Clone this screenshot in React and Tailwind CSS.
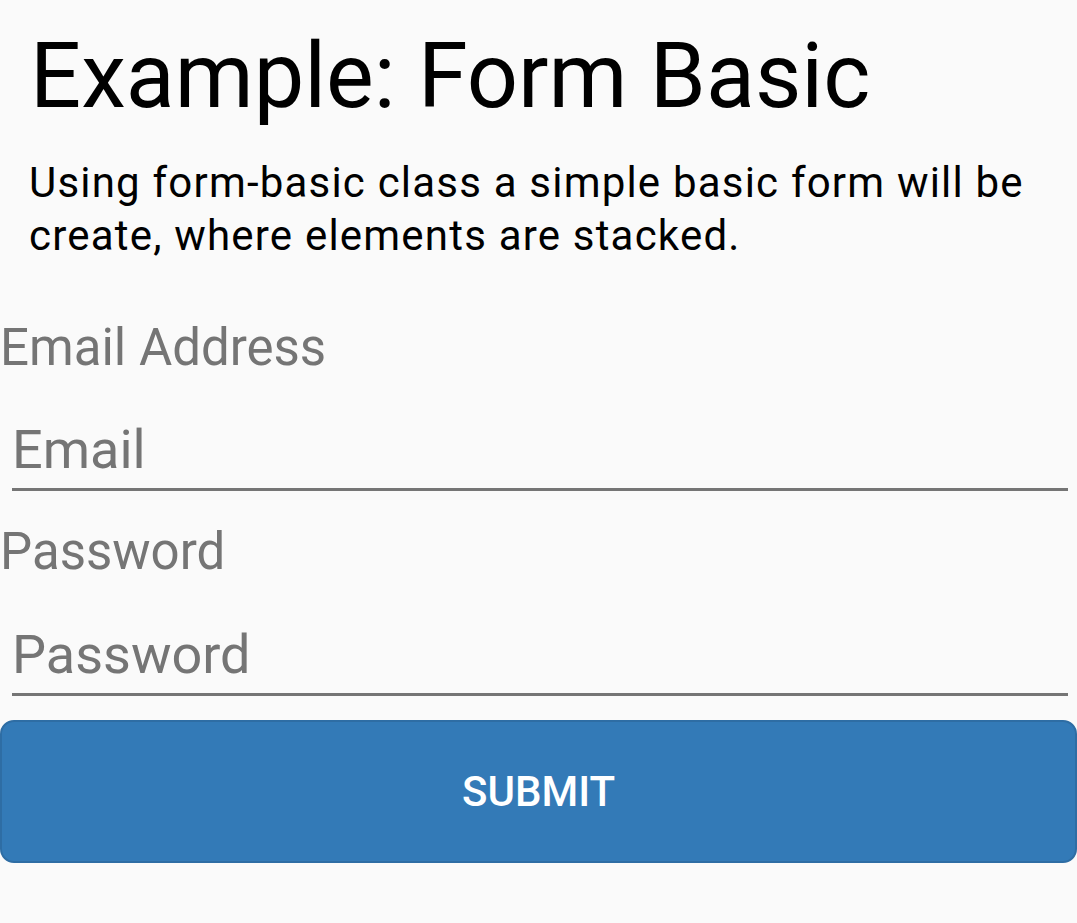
export default function App() {
  return (
    <div className="min-h-screen w-full bg-[#fafafa] font-['Roboto',sans-serif] overflow-hidden">
      <h1 className="mt-[22px] pl-[30px] text-[90px] leading-[109px] font-normal text-black whitespace-nowrap">
        Example: Form Basic
      </h1>
      <p className="mt-[25px] pl-[29px] pr-[20px] text-[42px] leading-[53px] tracking-[1.2px] text-black">
        Using form-basic class a simple basic form will be create, where elements are stacked.
      </p>

      <form className="flex flex-col" onSubmit={(e) => e.preventDefault()}>
        <label className="mt-[55px] pl-0 text-[51px] leading-[62px] text-[#757575]">Email Address</label>
        <input
          type="email"
          placeholder="Email"
          className="mt-[37px] ml-[12px] mr-[9px] h-[75px] box-border pb-[5px] px-0 text-[54px] leading-[67px] bg-transparent border-b-[3px] border-[#757575] outline-none placeholder:text-[#757575]"
        />

        <label className="mt-[30px] pl-0 text-[51px] leading-[62px] text-[#757575]">Password</label>
        <input
          type="password"
          placeholder="Password"
          className="mt-[38px] ml-[12px] mr-[9px] h-[75px] box-border pb-[5px] px-0 text-[54px] leading-[67px] bg-transparent border-b-[3px] border-[#757575] outline-none placeholder:text-[#757575]"
        />

        <button
          type="submit"
          className="mt-[24px] h-[143px] w-full rounded-[14px] border-2 border-[#2e6da4] bg-[#337ab7] text-white text-[42px] font-medium uppercase"
        >
          Submit
        </button>
      </form>
    </div>
  );
}
